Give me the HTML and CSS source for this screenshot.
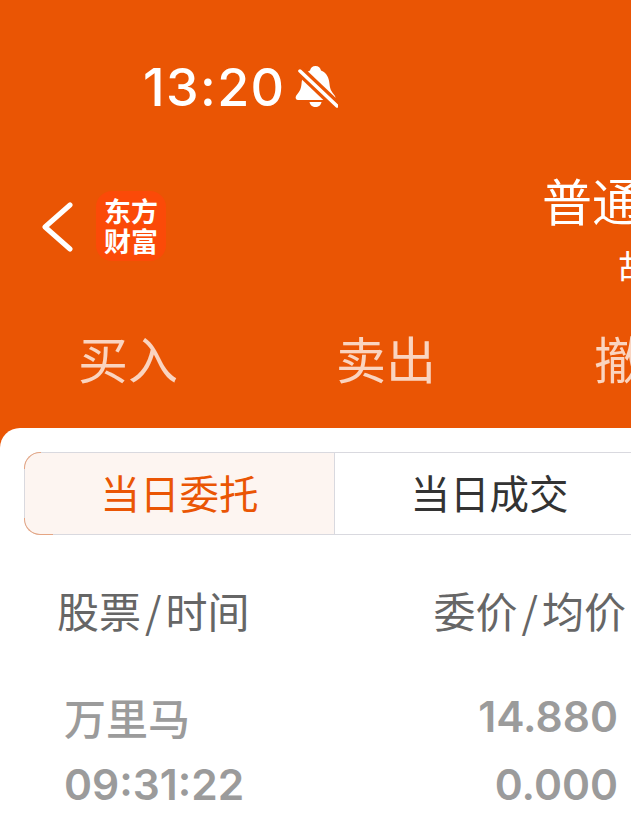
FILE: index.html
```html
<!DOCTYPE html>
<html lang="zh-CN">
<head>
    <meta charset="UTF-8">
    <meta name="viewport" content="width=device-width, initial-scale=1.0">
    <title>普通交易</title>
    <link rel="stylesheet" href="styles.css">
</head>
<body>
    <div class="container">
        <div class="status-bar">
            <span class="time">13:20</span>
            <svg class="bell" viewBox="0 0 44 44" width="44" height="44">
                <path d="M21.500 0c-3 0-5 2-5.500 4.500C10 7 8 12 7.500 18 7 24 5 26 2 30c-1 2 0 4 2 4h35c2 0 3-2 2-4-3-4-5-6-5.500-12C35 12 33 7 27 4.500 26.500 2 24.500 0 21.500 0z" fill="#fff"/>
                <path d="M15.500 36h12c-.5 3-3 5-6 5s-5.500-2-6-5z" fill="#fff"/>
                <path d="M2 1l40 38" stroke="#ea5504" stroke-width="10" fill="none"/>
                <path d="M6 5l37 35" stroke="#fff" stroke-width="3.500" stroke-linecap="round" fill="none"/>
            </svg>
        </div>

        <div class="nav-bar">
            <svg class="back" viewBox="0 0 32 54" width="32" height="54">
                <path d="M29 6L4 28l25 22" stroke="#fff" stroke-width="5" stroke-linecap="round" stroke-linejoin="round" fill="none"/>
            </svg>
            <div class="logo">东方<br>财富</div>
            <div class="title-box">
                <div class="title">普通交易</div>
                <div class="subtitle">胡</div>
            </div>
        </div>

        <div class="tabs">
            <span class="tab">买入</span>
            <span class="tab">卖出</span>
            <span class="tab">撤单</span>
        </div>

        <div class="sheet">
            <div class="segment">
                <div class="seg-item active">当日委托</div>
                <div class="seg-item">当日成交</div>
            </div>

            <div class="row head">
                <span>股票<span class="slash">/</span>时间</span>
                <span>委价<span class="slash">/</span>均价</span>
            </div>
            <div class="row data">
                <span class="name">万里马</span>
                <span>14.880</span>
            </div>
            <div class="row data">
                <span>09:31:22</span>
                <span>0.000</span>
            </div>
        </div>
    </div>
</body>
</html>
```
FILE: styles.css
```css
html, body {
    margin: 0;
    padding: 0;
    height: 100%;
    overflow: hidden;
}

body {
    font-family: 'Noto Sans CJK SC', 'Noto Sans', sans-serif;
    background-color: #ea5504;
}

.container {
    width: 631px;
    height: 829px;
    overflow: hidden;
}

.status-bar {
    display: flex;
    align-items: center;
    height: 60px;
    padding: 58px 0 0 143px;
}

.time {
    font-family: 'Inter', sans-serif;
    font-size: 52px;
    font-weight: 500;
    letter-spacing: 1.4px;
    line-height: 60px;
    color: white;
}

.bell {
    margin-left: 8px;
    flex-shrink: 0;
}

.nav-bar {
    display: flex;
    align-items: center;
    height: 70px;
    margin-top: 73px;
    padding-left: 41px;
}

.back {
    flex-shrink: 0;
}

.logo {
    flex-shrink: 0;
    width: 70px;
    height: 70px;
    margin-left: 23px;
    border-radius: 16px;
    background-color: #fb4a08;
    color: white;
    font-size: 27px;
    font-weight: 700;
    line-height: 30px;
    text-align: center;
    display: flex;
    align-items: center;
    justify-content: center;
}

.title-box {
    flex-shrink: 0;
    width: 200px;
    margin-top: 16px;
    margin-left: 376px;
    color: white;
}

.title {
    font-size: 50px;
    line-height: 64px;
    white-space: nowrap;
}

.subtitle {
    font-size: 34px;
    line-height: 70px;
    margin-left: 76px;
}

.tabs {
    display: flex;
    height: 60px;
    margin-top: 66px;
    padding-left: 78px;
    white-space: nowrap;
}

.tab {
    flex-shrink: 0;
    width: 258px;
    font-size: 50px;
    line-height: 60px;
    color: rgba(255, 255, 255, 0.75);
}

.sheet {
    height: 425px;
    margin-top: 41px;
    padding-top: 24px;
    background-color: white;
    border-radius: 20px 0 0 0;
}

.segment {
    position: relative;
    display: flex;
    width: 640px;
    height: 81px;
    margin-left: 24px;
    border: 1px solid #d9d9df;
    border-radius: 16px 0 0 16px;
}

/* orange tint on the two rounded corners of the active tab */
.segment::before,
.segment::after {
    content: "";
    position: absolute;
    left: -1px;
    border-left: 1px solid #e5a583;
}

.segment::before {
    top: -1px;
    width: 16px;
    height: 16px;
    border-top: 1px solid #e5a583;
    border-radius: 16px 0 0 0;
}

.segment::after {
    bottom: -1px;
    width: 28px;
    height: 16px;
    border-bottom: 1px solid #e5a583;
    border-radius: 0 0 0 16px;
}

.seg-item {
    flex-shrink: 0;
    width: 309px;
    font-size: 39.5px;
    line-height: 77px;
    text-align: center;
    color: #333;
}

.seg-item.active {
    background-color: #fdf5f1;
    border-right: 1px solid #d9d9df;
    border-radius: 15px 0 0 15px;
    color: #ea5504;
}

.row {
    display: flex;
    justify-content: space-between;
    white-space: nowrap;
}

.head {
    margin-top: 48px;
    padding: 0 5px 0 57px;
    font-size: 42px;
    line-height: 54px;
    color: #666;
}

.slash {
    margin: 0 4px;
}

.data {
    padding: 0 13px 0 64px;
    font-family: 'Inter', 'Noto Sans CJK SC', sans-serif;
    font-size: 42.5px;
    font-weight: 600;
    line-height: 68px;
    color: #9b9b9b;
}

.data .name {
    font-family: 'Noto Sans CJK SC', sans-serif;
    font-size: 42px;
    font-weight: 500;
}

.head + .data {
    margin-top: 46px;
}
```
